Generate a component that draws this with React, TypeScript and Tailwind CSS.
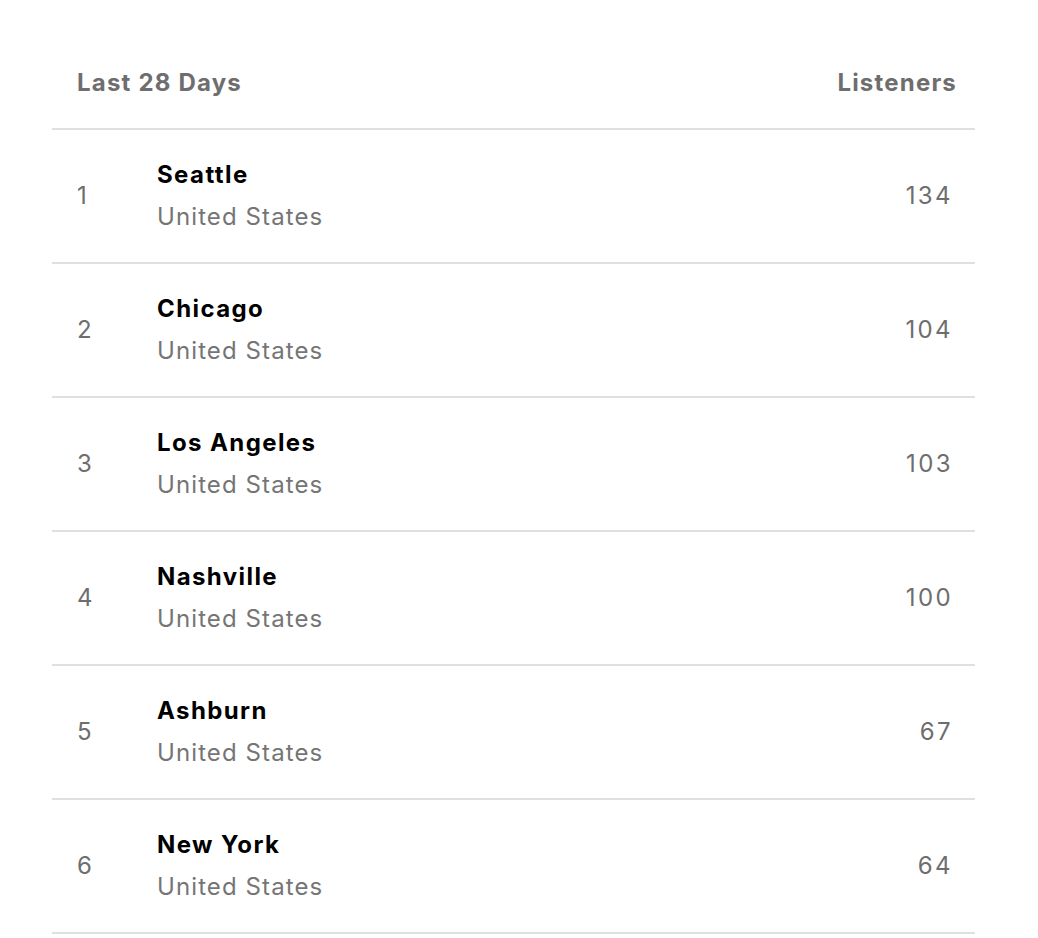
import React from "react";

const rows = [
  { rank: 1, city: "Seattle", country: "United States", listeners: 134 },
  { rank: 2, city: "Chicago", country: "United States", listeners: 104 },
  { rank: 3, city: "Los Angeles", country: "United States", listeners: 103 },
  { rank: 4, city: "Nashville", country: "United States", listeners: 100 },
  { rank: 5, city: "Ashburn", country: "United States", listeners: 67 },
  { rank: 6, city: "New York", country: "United States", listeners: 64 },
];

export default function App() {
  return (
    <div className="min-h-[938px] w-[1038px] bg-white font-['Inter',sans-serif]">
      <div className="ml-[52px] w-[923px]">
        <div className="flex h-[130px] items-start justify-between border-b-2 border-[#e0e0e0] pl-[25px] pr-[18px] pt-[67px] text-[24px] font-bold leading-[32px] tracking-[1.2px] text-[#6e6e6e]">
          <span>Last 28 Days</span>
          <span>Listeners</span>
        </div>
        {rows.map((r) => (
          <div
            key={r.rank}
            className="flex h-[134px] items-center border-b-2 border-[#e0e0e0] pl-[25px] pr-[24px] text-[24px]"
          >
            <div className="w-[80px] text-[#6e6e6e]">{r.rank}</div>
            <div className="flex flex-1 flex-col">
              <span className="font-bold leading-[42px] tracking-[1.4px] text-black">{r.city}</span>
              <span className="leading-[42px] tracking-[1.1px] text-[#757575]">{r.country}</span>
            </div>
            <div className="tracking-[2.4px] text-[#6e6e6e] -mr-[2px]">{r.listeners}</div>
          </div>
        ))}
      </div>
    </div>
  );
}
